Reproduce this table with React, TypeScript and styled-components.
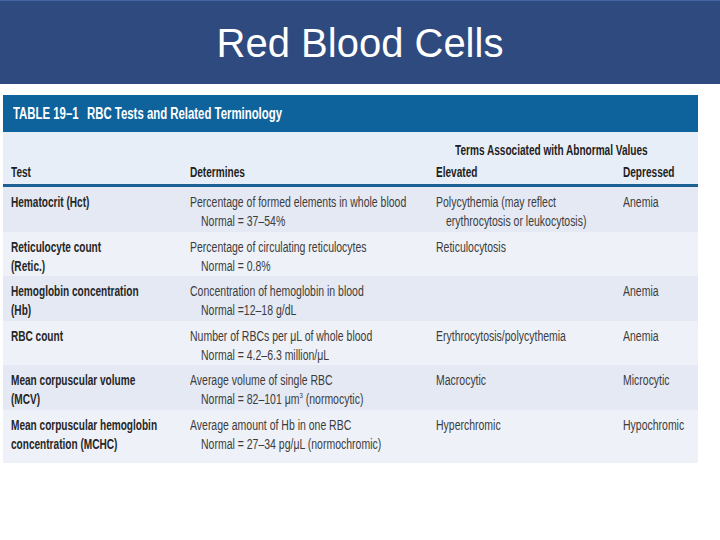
import React from 'react';
import styled, { createGlobalStyle } from 'styled-components';

const Global = createGlobalStyle`
    html, body {
        margin: 0;
        padding: 0;
        background: #ffffff;
    }
    body {
        width: 720px;
        height: 540px;
        overflow: hidden;
        font-family: "Liberation Sans", Arial, sans-serif;
    }
`;

const Slide = styled.div`
    width: 720px;
    height: 540px;
    display: flex;
    flex-direction: column;
    background: #ffffff;
`;

const TitleBar = styled.header`
    height: 83px;
    border-top: 1px solid #4566a6;
    background: #2f4a7e;
    display: flex;
    align-items: center;
    justify-content: center;
`;

const Title = styled.h1`
    margin: 0;
    font-weight: normal;
    font-size: 40px;
    color: #ffffff;
    padding-top: 2px;
`;

const Content = styled.main`
    padding: 11px 22px 0 3px;
`;

const Table = styled.section`
    width: 695px;
    font-family: "Liberation Sans", Arial, sans-serif;
    background: #e8eef8;
`;

/* the printed table uses a condensed face: squeeze each line of text */
const Line = styled.div<{ $bold?: boolean; $indent?: number }>`
    width: max-content;
    white-space: nowrap;
    font-weight: ${p => (p.$bold ? 'bold' : 'normal')};
    margin-left: ${p => p.$indent ?? 0}px;
    transform: scaleX(${p => (p.$bold ? 0.73 : 0.76)});
    transform-origin: left center;
`;

const Caption = styled.div`
    height: 37px;
    background: #0f639c;
    display: grid;
    grid-template-columns: 74px 1fr;
    align-items: center;
    padding-left: 10px;
    color: #ffffff;
    font-size: 15.6px;
`;

const HeadArea = styled.div`
    padding-top: 9px;
    height: 43px;
    border-bottom: 3px solid #1d6194;
    box-sizing: content-box;
    font-size: 13.8px;
    line-height: 19px;
    color: #1e1e1e;
`;

const Grid = styled.div<{ $tone?: 'dark' | 'light' }>`
    display: grid;
    grid-template-columns: 179px 246px 187px 1fr;
    padding-left: 8px;
    background: ${p => (p.$tone === 'dark' ? '#e4e9f4' : p.$tone === 'light' ? '#eef1f8' : 'transparent')};
`;

const Row = styled(Grid)`
    padding-top: 6px;
    padding-bottom: 0.5px;
    line-height: 19px;
    font-size: 13.8px;

    &:last-child {
        padding-bottom: 9px;
    }
`;

const Group = styled.div`
    grid-column: 3 / 5;
`;

const HeadCell = styled.div`
    margin-top: 3px;
`;

const Name = styled.div`
    color: #262626;
`;

const Cell = styled.div`
    color: #3c3c3c;
`;

const Sup = styled.sup`
    font-size: 8px;
    line-height: 0;
`;

type RowData = {
    name: string[];
    det: string;
    normal: React.ReactNode;
    elev: string[];
    dep: string;
};

const rows: RowData[] = [
    {
        name: ['Hematocrit (Hct)'],
        det: 'Percentage of formed elements in whole blood',
        normal: 'Normal = 37–54%',
        elev: ['Polycythemia (may reflect', 'erythrocytosis or leukocytosis)'],
        dep: 'Anemia',
    },
    {
        name: ['Reticulocyte count', '(Retic.)'],
        det: 'Percentage of circulating reticulocytes',
        normal: 'Normal = 0.8%',
        elev: ['Reticulocytosis'],
        dep: '',
    },
    {
        name: ['Hemoglobin concentration', '(Hb)'],
        det: 'Concentration of hemoglobin in blood',
        normal: 'Normal =12–18 g/dL',
        elev: [],
        dep: 'Anemia',
    },
    {
        name: ['RBC count'],
        det: 'Number of RBCs per μL of whole blood',
        normal: 'Normal = 4.2–6.3 million/μL',
        elev: ['Erythrocytosis/polycythemia'],
        dep: 'Anemia',
    },
    {
        name: ['Mean corpuscular volume', '(MCV)'],
        det: 'Average volume of single RBC',
        normal: (
            <>
                Normal = 82–101 μm<Sup>3</Sup> (normocytic)
            </>
        ),
        elev: ['Macrocytic'],
        dep: 'Microcytic',
    },
    {
        name: ['Mean corpuscular hemoglobin', 'concentration (MCHC)'],
        det: 'Average amount of Hb in one RBC',
        normal: 'Normal = 27–34 pg/μL (normochromic)',
        elev: ['Hyperchromic'],
        dep: 'Hypochromic',
    },
];

export default function App() {
    return (
        <Slide>
            <Global />
            <TitleBar>
                <Title>Red Blood Cells</Title>
            </TitleBar>
            <Content>
                <Table>
                    <Caption>
                        <Line $bold>TABLE 19–1</Line>
                        <Line $bold>RBC Tests and Related Terminology</Line>
                    </Caption>
                    <HeadArea>
                        <Grid>
                            <Group>
                                <Line $bold $indent={19}>Terms Associated with Abnormal Values</Line>
                            </Group>
                            <HeadCell><Line $bold>Test</Line></HeadCell>
                            <HeadCell><Line $bold>Determines</Line></HeadCell>
                            <HeadCell><Line $bold>Elevated</Line></HeadCell>
                            <HeadCell><Line $bold>Depressed</Line></HeadCell>
                        </Grid>
                    </HeadArea>
                    {rows.map((r, i) => (
                        <Row key={i} $tone={i % 2 === 0 ? 'dark' : 'light'}>
                            <Name>
                                {r.name.map(n => (
                                    <Line key={n} $bold>{n}</Line>
                                ))}
                            </Name>
                            <Cell>
                                <Line>{r.det}</Line>
                                <Line $indent={11}>{r.normal}</Line>
                            </Cell>
                            <Cell>
                                {r.elev.map((e, j) => (
                                    <Line key={e} $indent={j === 0 ? 0 : 10}>{e}</Line>
                                ))}
                            </Cell>
                            <Cell>{r.dep && <Line>{r.dep}</Line>}</Cell>
                        </Row>
                    ))}
                </Table>
            </Content>
        </Slide>
    );
}
